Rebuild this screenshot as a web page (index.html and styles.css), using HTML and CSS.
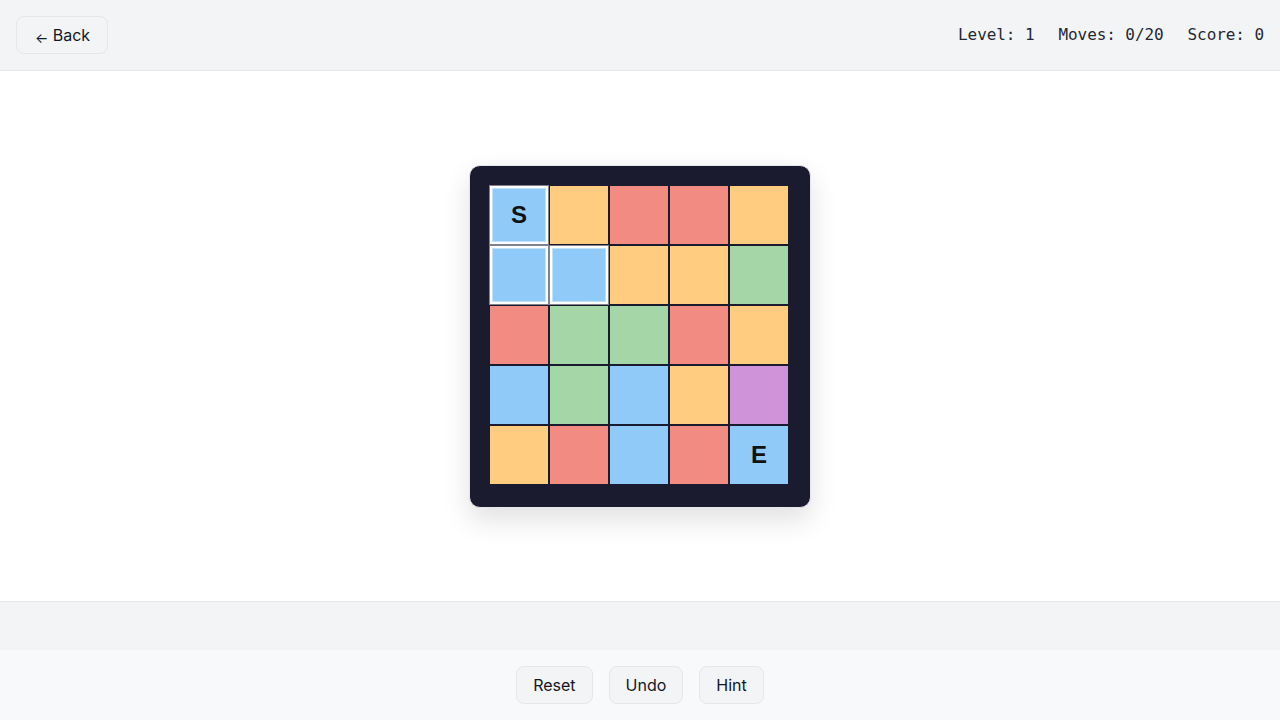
FILE: index.html
```html
<!DOCTYPE html>
<html lang="en">
<head>
<meta charset="utf-8">
<title>Color Path</title>
<link rel="stylesheet" href="styles.css">
</head>
<body>
<div class="app">
  <header class="topbar">
    <button class="btn back-btn"><span class="arrow">←</span> Back</button>
    <div class="stats">
      <span>Level: 1</span>
      <span>Moves: 0/20</span>
      <span>Score: 0</span>
    </div>
  </header>
  <main class="stage">
    <div class="board">
      <div class="grid">
        <div class="cell blue sel">S</div>
        <div class="cell orange"></div>
        <div class="cell red"></div>
        <div class="cell red"></div>
        <div class="cell orange"></div>

        <div class="cell blue sel"></div>
        <div class="cell blue sel"></div>
        <div class="cell orange"></div>
        <div class="cell orange"></div>
        <div class="cell green"></div>

        <div class="cell red"></div>
        <div class="cell green"></div>
        <div class="cell green"></div>
        <div class="cell red"></div>
        <div class="cell orange"></div>

        <div class="cell blue"></div>
        <div class="cell green"></div>
        <div class="cell blue"></div>
        <div class="cell orange"></div>
        <div class="cell purple"></div>

        <div class="cell orange"></div>
        <div class="cell red"></div>
        <div class="cell blue"></div>
        <div class="cell red"></div>
        <div class="cell blue">E</div>
      </div>
    </div>
  </main>
  <div class="strip"></div>
  <footer class="controls">
    <button class="btn">Reset</button>
    <button class="btn">Undo</button>
    <button class="btn">Hint</button>
  </footer>
</div>
</body>
</html>
```

FILE: styles.css
```css
* { box-sizing: border-box; }
html, body { margin: 0; padding: 0; }
body {
  font-family: Inter, "Noto Sans", sans-serif;
  color: #111827;
  background: #ffffff;
}
.app {
  display: flex;
  flex-direction: column;
  height: 720px;
}
.topbar {
  height: 71px;
  flex: none;
  display: flex;
  align-items: center;
  justify-content: space-between;
  padding: 0 16px;
  background: #f3f4f6;
  border-bottom: 1px solid #e5e7eb;
}
.btn {
  font-family: Inter, "Noto Sans", sans-serif;
  font-size: 16px;
  color: #111827;
  background: #f3f4f6;
  border: 1px solid #e5e7eb;
  border-radius: 8px;
  height: 38px;
  padding: 0 16px;
  cursor: pointer;
}
.back-btn {
  margin-top: -1px;
  width: 92px;
  padding: 0 0 0 1px;
  font-size: 16px;
}
.arrow {
  font-size: 14px;
  position: relative;
  top: 2px;
}
.stats {
  display: flex;
  gap: 24px;
  font-family: "DejaVu Sans Mono", "Liberation Mono", monospace;
  font-size: 16px;
  letter-spacing: -0.08px;
  color: #1f2937;
  margin-right: 0;
  margin-top: -2px;
}
.stage {
  flex: 1;
  display: flex;
  align-items: center;
  justify-content: center;
  background: #ffffff;
}
.board {
  background: #1a1b2e;
  border: 1px solid #e5e7eb;
  border-radius: 11px;
  padding: 20px 22px 23px 20px;
  box-shadow: 0 12px 28px rgba(0, 0, 0, 0.12);
}
.grid {
  display: grid;
  grid-template-columns: repeat(5, 58px);
  grid-template-rows: repeat(5, 58px);
  gap: 2px;
}
.cell {
  display: flex;
  align-items: center;
  justify-content: center;
  font-family: "Liberation Sans", Arial, sans-serif;
  font-weight: 700;
  font-size: 24px;
  color: #111111;
}
.blue { background: #90caf9; }
.orange { background: #ffcc80; }
.red { background: #f28b82; }
.green { background: #a5d6a7; }
.purple { background: #ce93d8; }
.sel {
  border: 2px solid #ffffff;
  box-shadow: 0 0 0 1px rgba(255, 255, 255, 0.45), inset 0 0 0 1px rgba(255, 255, 255, 0.45);
}
.strip {
  height: 49px;
  flex: none;
  background: #f3f4f6;
  border-top: 1px solid #e5e7eb;
}
.controls {
  height: 70px;
  flex: none;
  display: flex;
  align-items: center;
  justify-content: center;
  gap: 16px;
  background: #f8f9fa;
}
```
